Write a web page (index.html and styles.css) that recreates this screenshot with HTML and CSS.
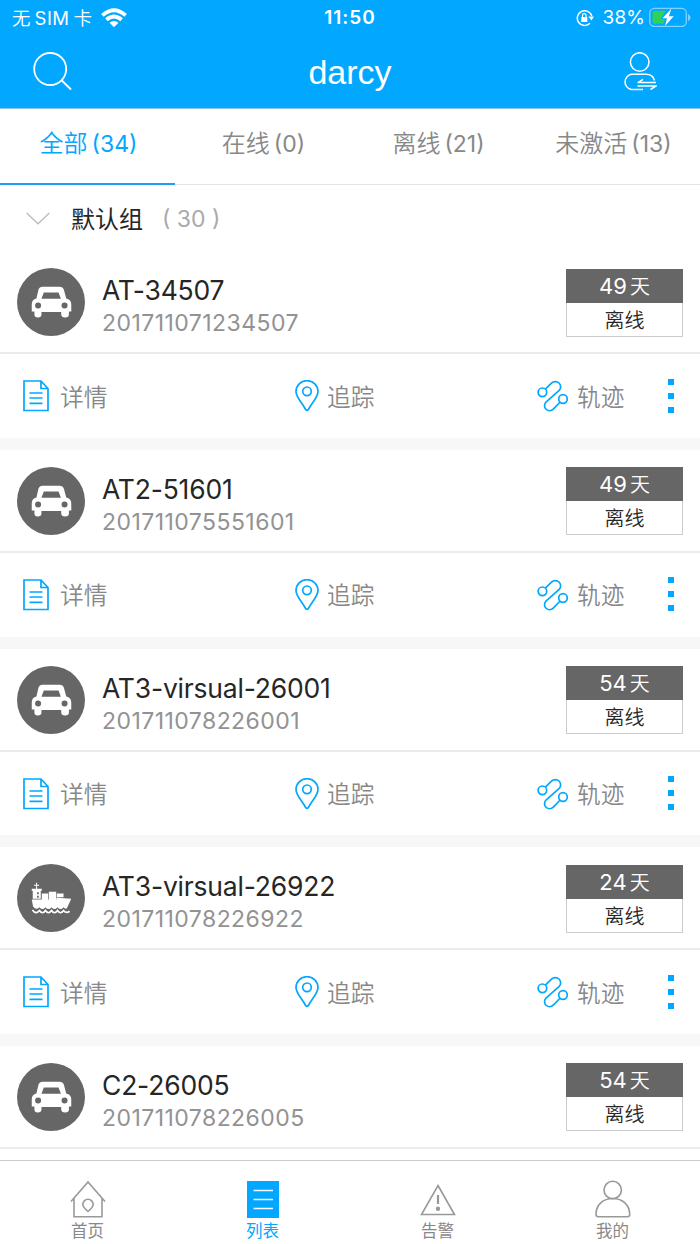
FILE: index.html
```html
<!DOCTYPE html>
<html lang="zh-CN">
<head>
    <meta charset="UTF-8">
    <meta name="viewport" content="width=device-width, initial-scale=1.0">
    <title>darcy</title>
    <link rel="stylesheet" href="styles.css">
</head>
<body>
    <!-- Icons -->
    <svg class="sprite">
        <symbol id="car" viewBox="0 0 203 203">
            <path fill="#fff" fill-rule="evenodd" d="M76 56H127Q137 56 140 65L147 91Q162 95 162 108V130H155V139Q155 148 144 148Q132 148 132 139V131H73V139Q73 148 62 148Q52 148 52 139V130H44V108Q44 95 58 91L64 65Q67 56 76 56ZM80 73L73 92H131L124 73ZM63 103A9 9 0 1 0 63 121A9 9 0 1 0 63 103ZM142 103A9 9 0 1 0 142 121A9 9 0 1 0 142 103Z"/>
        </symbol>
        <symbol id="ship" viewBox="0 0 203 203">
            <path fill="#fff" fill-rule="evenodd" d="M57 56H60V62H66V65H60V74H74V80H71V104H47V80H44V74H57V65H51V62H57ZM60 84V90H65V84ZM60 95V101H65V95ZM74 88H93V106H74ZM95 83H117V106H95ZM119 88H139V99H119ZM44 106H118V101L162 104L149 132Q143 136 139 129Q130 140 121 129Q112 140 103 129Q94 140 85 129Q76 140 67 129Q57 139 48 127Z"/>
            <path fill="none" stroke="#fff" stroke-width="5" d="M46 137Q57 152 67 139Q76 152 85 139Q94 152 103 139Q112 152 121 139Q130 152 139 139Q147 149 157 141"/>
        </symbol>
        <symbol id="detail" viewBox="0 0 26 32">
            <path d="M1 1H18L25 8.500V30.500H1ZM18 1V8.500H25M6.500 13H19.500M6.500 18H19.500M6.500 23.300H19.500"/>
        </symbol>
        <symbol id="pin" viewBox="0 0 24 32">
            <path d="M12 30.300Q11 30.300 10 28.500C7 23 1 17 1 11.500A11 10.800 0 0 1 23 11.500C23 17 17 23 14 28.500Q13 30.300 12 30.300Z"/>
            <circle cx="12" cy="11.300" r="4.300"/>
        </symbol>
        <symbol id="track" viewBox="0 0 32 32">
            <circle cx="5.400" cy="12.300" r="4.300"/>
            <circle cx="26" cy="19" r="4.300"/>
            <path d="M8.300 9.200L14.500 3.200A5.300 5.300 0 0 1 22.200 10.500L9 22A5.100 5.100 0 0 0 16.300 29.200L23.200 22"/>
        </symbol>
    </svg>

    <div id="app">
        <header>
            <div class="status-bar">
                <div class="carrier">
                    <span>无</span><span class="sim">SIM</span><span>卡</span>
                    <svg class="wifi" width="26" height="20" viewBox="0 0 26 20">
                        <path fill="none" stroke="#fff" stroke-width="3.800" d="M1.400 7.300Q13 -3 24.600 7.300M5.400 11.700Q13 5.200 20.600 11.700"/>
                        <path fill="#fff" d="M8.500 14.800Q13 11.300 17.500 14.800L13 19.200Z"/>
                    </svg>
                </div>
                <div class="clock">11:50</div>
                <div class="power">
                    <svg width="18" height="18" viewBox="0 0 18 18">
                        <path fill="none" stroke="#fff" stroke-width="1.500" d="M14 14.300A7.400 7.400 0 1 1 15.800 7"/>
                        <path fill="#fff" d="M12.300 7.500H18L15.500 11.500ZM5.300 8H11.300V13H5.300Z"/>
                        <path fill="none" stroke="#fff" stroke-width="1.200" d="M6.500 8V6.500A1.800 1.800 0 0 1 10.100 6.500V8"/>
                    </svg>
                    <span class="percent">38%</span>
                    <svg width="42" height="22" viewBox="0 0 42 22">
                        <rect x=".800" y="1.300" width="36.500" height="18" rx="4.500" fill="none" stroke="#7fd2ff" stroke-width="1.300"/>
                        <path fill="#7fd2ff" d="M39 7Q41.500 8 41.500 10.500Q41.500 13 39 14Z"/>
                        <path fill="#30d158" d="M6 3.800H17L11.500 12H16L14.500 16.800H6Q3.500 16.800 3.500 14.300V6.300Q3.500 3.800 6 3.800Z"/>
                        <path fill="#fff" d="M22.500 1.500L13.500 11.300H18L16 19.100L24.700 9.200H19.800Z"/>
                    </svg>
                </div>
            </div>
            <div class="title-bar">
                <svg width="40" height="40" viewBox="0 0 40 40">
                    <path fill="none" stroke="#fff" stroke-width="1.800" d="M28.300 28L38 37.500"/>
                    <circle cx="17.200" cy="17" r="16" fill="none" stroke="#fff" stroke-width="1.800"/>
                </svg>
                <h1>darcy</h1>
                <svg width="34" height="40" viewBox="0 0 34 40">
                    <g fill="none" stroke="#fff" stroke-width="1.500">
                        <circle cx="16.700" cy="10" r="9.300"/>
                        <path d="M20 37.500H8.500A7.700 7.700 0 0 1 8.500 22.300H23Q30 22.300 31.500 28.500M14.500 30.600H33M20 27.300L15 30.600M14.500 34H33L27.500 37.500"/>
                    </g>
                </svg>
            </div>
        </header>

        <nav class="tabs">
            <a class="active">全部<span>(34)</span></a>
            <a>在线<span>(0)</span></a>
            <a>离线<span>(21)</span></a>
            <a>未激活<span>(13)</span></a>
        </nav>

        <main>
            <div class="group">
                <svg width="24" height="13" viewBox="0 0 24 13"><path fill="none" stroke="#bbb" stroke-width="1.300" d="M.700 1L12 11.800L23.300 1"/></svg>
                <h2>默认组</h2>
                <span>( 30 )</span>
            </div>
            <div id="devices"></div>
        </main>

        <footer>
            <a>
                <svg width="36" height="38" viewBox="0 0 36 38">
                    <path d="M1 21.500L18 2L35 21.500M4 18.500V36.700H32V18.500M18 31.500Q12.800 27 12.800 24.500A5.200 5.200 0 0 1 23.200 24.500Q23.200 27 18 31.500Z"/>
                </svg>
                首页
            </a>
            <a class="active">
                <svg width="36" height="38" viewBox="0 0 36 38">
                    <rect x="2" y="1" width="32" height="37" fill="#02a7ff" stroke="none"/>
                    <path stroke="#fff" d="M8.500 10.500H28M8.500 19.500H28M8.500 28.500H28"/>
                </svg>
                列表
            </a>
            <a>
                <svg width="36" height="38" viewBox="0 0 36 38">
                    <path d="M18 5.500L34.500 34.500H1.500Z"/>
                    <path stroke-width="2.200" d="M18 15V24"/>
                    <circle cx="18" cy="28.700" r="2.200" fill="#999" stroke="none"/>
                </svg>
                告警
            </a>
            <a>
                <svg width="36" height="38" viewBox="0 0 36 38">
                    <circle cx="17.700" cy="10" r="8.700"/>
                    <path d="M3.500 36.700Q1 36.700 1 34.500C1 25 8 18.500 17.800 18.500S34.700 25 34.700 34.500Q34.700 36.700 32.500 36.700Z"/>
                </svg>
                我的
            </a>
        </footer>
    </div>

    <script>
        const devices = [
            { name: 'AT-34507', imei: '201711071234507', days: 49, icon: 'car' },
            { name: 'AT2-51601', imei: '201711075551601', days: 49, icon: 'car' },
            { name: 'AT3-virsual-26001', imei: '201711078226001', days: 54, icon: 'car' },
            { name: 'AT3-virsual-26922', imei: '201711078226922', days: 24, icon: 'ship' },
            { name: 'C2-26005', imei: '201711078226005', days: 54, icon: 'car' }
        ];

        const list = document.getElementById('devices');
        const actions = `
            <div class="actions">
                <a class="detail"><svg width="26" height="32"><use href="#detail"/></svg>详情</a>
                <a class="follow"><svg width="24" height="32"><use href="#pin"/></svg>追踪</a>
                <a class="track"><svg width="32" height="32"><use href="#track"/></svg>轨迹</a>
                <div class="more"><i></i><i></i><i></i></div>
            </div>`;

        devices.forEach((device, index) => {
            const last = index === devices.length - 1;
            const item = document.createElement('div');
            item.classList.add('device');
            item.innerHTML = `
                <div class="info">
                    <svg class="avatar"><use href="#${device.icon}"/></svg>
                    <div class="names">
                        <h3>${device.name}</h3>
                        <p>${device.imei}</p>
                    </div>
                    <div class="state">
                        <div class="days"><span>${device.days}</span>天</div>
                        <div class="offline">离线</div>
                    </div>
                </div>
                ${last ? '' : actions}`;
            list.appendChild(item);
        });
    </script>
</body>
</html>
```

FILE: styles.css
```css
* {
    margin: 0;
    padding: 0;
    box-sizing: border-box;
}

body {
    font-family: Inter, "Noto Sans CJK SC", sans-serif;
    background-color: #fff;
    color: #262626;
    overflow: hidden;
}

svg {
    display: block;
    flex: none;
}

h1, h2, h3 {
    font-weight: 400;
}

.sprite {
    display: none;
}

#app {
    width: 700px;
    height: 1244px;
    display: flex;
    flex-direction: column;
}

/* Header */
header {
    height: 109px;
    flex: none;
    background-color: #02a7ff;
    border-bottom: 1px solid #8cc5e6;
    color: #fff;
}

.status-bar {
    height: 36px;
    display: grid;
    grid-template-columns: 1fr auto 1fr;
    align-items: center;
    padding: 0 9px 0 12px;
    font-size: 19px;
    line-height: 36px;
}

.carrier, .power {
    display: flex;
    align-items: center;
}

.carrier {
    font-size: 18.500px;
    font-weight: 350;
}

.sim {
    margin: 0 4px;
    font-weight: 400;
    letter-spacing: 0.500px;
}

.wifi {
    margin: -1px 0 0 9px;
}

.clock {
    margin-right: 3px;
    font-weight: 600;
    letter-spacing: 1px;
}

.power {
    justify-content: flex-end;
}

.percent {
    margin: 0 4px 0 9px;
    letter-spacing: 0.1px;
}

.title-bar {
    height: 72px;
    display: flex;
    justify-content: space-between;
    align-items: center;
    padding: 0 43px 0 33px;
}

h1 {
    font: 34px/72px "Liberation Sans", Arial, sans-serif;
    padding-left: 4px;
}

/* Tabs */
.tabs {
    flex: none;
    height: 76px;
    display: grid;
    grid-template-columns: repeat(4, 1fr);
    border-bottom: 1px solid #e4e4e4;
}

.tabs a {
    height: 76px;
    padding-left: 2px;
    text-align: center;
    font-size: 24px;
    line-height: 69px;
    font-weight: 350;
    color: #888;
}

.tabs span {
    margin-left: 4px;
    font-size: 23px;
    font-weight: 400;
}

.tabs .active {
    color: #02a7ff;
    border-bottom: 2px solid #1e9fee;
}

/* List */
main {
    flex: 1;
    min-height: 0;
    overflow: hidden;
}

.group {
    height: 66.400px;
    display: flex;
    align-items: center;
    padding-left: 26px;
}

.group h2 {
    margin: 3px 19px 0 21px;
    font-size: 24px;
    line-height: 36px;
}

.group span {
    margin-top: 2px;
    font-size: 23px;
    color: #aaa;
}

.device {
    height: 198.600px;
    border-bottom: 12.400px solid #f7f7f7;
}

.device:last-child {
    border-bottom: none;
}

.info {
    height: 103px;
    display: flex;
    align-items: center;
    padding: 1px 17px 0;
    border-bottom: 2px solid #ebebeb;
}

.avatar {
    width: 68px;
    height: 68px;
    border-radius: 50%;
    background-color: #666;
}

.names {
    flex: 1;
    margin-left: 17px;
}

h3 {
    font-size: 26.500px;
    line-height: 34px;
    margin-top: 9px;
    letter-spacing: -0.200px;
}

.names p {
    font-size: 23px;
    line-height: 33px;
    color: #929292;
    letter-spacing: 0.450px;
}

.state {
    width: 117px;
    height: 68px;
    margin-top: 1px;
    border: 1px solid #ccc;
    text-align: center;
    font-size: 20px;
    font-weight: 350;
}

.days {
    margin: -1px -1px 0;
    height: 34px;
    line-height: 35px;
    background-color: #666;
    color: #fff;
}

.days span {
    font-size: 22px;
    font-weight: 400;
    margin-right: 3px;
}

.offline {
    line-height: 36px;
}

.actions {
    height: 83px;
    display: flex;
    align-items: center;
    font-size: 23.700px;
    line-height: 38px;
    font-weight: 350;
    color: #888;
}

.actions a {
    display: flex;
    align-items: center;
    padding-top: 4px;
}

.actions svg {
    margin-top: -3px;
    fill: none;
    stroke: #02a7ff;
    stroke-width: 1.700;
}

.detail {
    width: 272px;
    margin-left: 23px;
    gap: 11px;
}

.follow {
    width: 242px;
    gap: 8px;
}

.track {
    width: 88px;
    gap: 8px;
}

.more {
    margin-left: 43px;
    display: flex;
    flex-direction: column;
    gap: 8px;
}

.more i {
    width: 6px;
    height: 6px;
    background-color: #02a7ff;
}

/* Footer */
footer {
    flex: none;
    height: 84px;
    display: grid;
    grid-template-columns: repeat(4, 1fr);
    border-top: 1px solid #ccc;
    background-color: #fff;
}

footer a {
    display: flex;
    flex-direction: column;
    align-items: center;
    padding-top: 19px;
    font-size: 16.500px;
    line-height: 27px;
    color: #888;
}

footer svg {
    fill: none;
    stroke: #999;
    stroke-width: 1.600;
}

footer .active {
    color: #02a7ff;
}
```
